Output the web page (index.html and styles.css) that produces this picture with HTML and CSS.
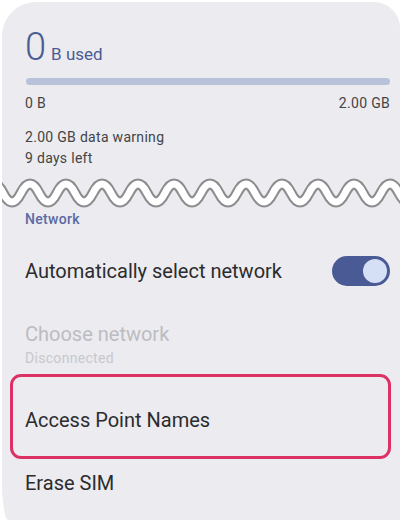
FILE: index.html
```html
<!DOCTYPE html>
<html lang="en">
<head>
  <meta charset="UTF-8">
  <meta name="viewport" content="width=device-width, initial-scale=1.0">
  <title>SIM settings</title>
  <link rel="stylesheet" href="styles.css">
</head>
<body>

  <!-- Phone screen card -->
  <div class="screen">

    <!-- Data usage -->
    <section class="usage">
      <div class="usage-total">
        <span class="usage-num">0</span>
        <span class="usage-unit">B used</span>
      </div>
      <div class="usage-bar"></div>
      <div class="usage-scale">
        <span>0 B</span>
        <span>2.00 GB</span>
      </div>
      <p class="usage-note">2.00 GB data warning</p>
      <p class="usage-note">9 days left</p>
    </section>

    <!-- Cut mark -->
    <svg class="wave" width="398" height="34" viewBox="0 0 398 34">
      <path class="wave-edge" d="M -17 17 Q -8 -1 1 17 T 19 17 T 37 17 T 55 17 T 73 17 T 91 17 T 109 17 T 127 17 T 145 17 T 163 17 T 181 17 T 199 17 T 217 17 T 235 17 T 253 17 T 271 17 T 289 17 T 307 17 T 325 17 T 343 17 T 361 17 T 379 17 T 397 17 T 415 17"/>
      <path class="wave-fill" d="M -17 17 Q -8 -1 1 17 T 19 17 T 37 17 T 55 17 T 73 17 T 91 17 T 109 17 T 127 17 T 145 17 T 163 17 T 181 17 T 199 17 T 217 17 T 235 17 T 253 17 T 271 17 T 289 17 T 307 17 T 325 17 T 343 17 T 361 17 T 379 17 T 397 17 T 415 17"/>
    </svg>

    <!-- Network settings -->
    <section class="network">
      <h2 class="section-title">Network</h2>

      <div class="row row-switch">
        <span class="row-title">Automatically select network</span>
        <span class="switch"><span class="switch-thumb"></span></span>
      </div>

      <div class="row row-disabled">
        <span class="row-title">Choose network</span>
        <span class="row-sub">Disconnected</span>
      </div>

      <div class="row row-highlight">
        <span class="row-title">Access Point Names</span>
      </div>

      <div class="row row-plain">
        <span class="row-title">Erase SIM</span>
      </div>
    </section>

  </div>

</body>
</html>
```
FILE: styles.css
```css
/* Global Styles */
body {
  margin: 0;
  padding: 0;
  background-color: #ffffff;
  font-family: Roboto, "Noto Sans", sans-serif;
  overflow: hidden;
}

p, h2 {
  margin: 0;
}

.screen {
  margin: 2px 0 0 2px;
  width: 398px;
  height: 518px;
  overflow: hidden;
  background-color: #ebebf0;
  border-radius: 34px 26px 0 6px / 34px 26px 0 40px;
}

/* Data usage */
.usage {
  padding: 26px 10px 0 23px;
  color: #444;
}

.usage-total {
  display: flex;
  align-items: baseline;
  gap: 5px;
  height: 38px;
  color: #4b5b94;
}

.usage-num {
  font-size: 38px;
  font-weight: 300;
  line-height: 38px;
}

.usage-unit {
  font-size: 17px;
  line-height: 20px;
}

.usage-bar {
  height: 7px;
  margin: 12px 0 0 1px;
  border-radius: 4px;
  background-color: #b8c2d8;
}

.usage-scale {
  display: flex;
  justify-content: space-between;
  font-size: 14px;
  line-height: 18px;
  letter-spacing: 0.3px;
  margin: 9px 0 15px 0;
}

.usage-note {
  font-size: 14px;
  line-height: 21px;
  letter-spacing: 0.3px;
}

/* Cut mark */
.wave {
  display: block;
  margin-top: 7px;
}

.wave path {
  fill: none;
  stroke-linecap: round;
}

.wave-edge {
  stroke: #8d8d90;
  stroke-width: 11;
}

.wave-fill {
  stroke: #ffffff;
  stroke-width: 7;
}

/* Network settings */
.network {
  padding: 1px 9px 0 8px;
}

.section-title {
  font-size: 14px;
  line-height: 16px;
  font-weight: 500;
  letter-spacing: 0.3px;
  color: #5b6aa3;
  padding-left: 15px;
}

.row {
  display: flex;
  flex-direction: column;
  justify-content: center;
  padding: 0 15px;
}

.row-title {
  font-size: 20px;
  line-height: 24px;
  color: #2c2c2e;
}

.row-switch {
  flex-direction: row;
  justify-content: space-between;
  align-items: center;
  height: 52px;
  margin-top: 18px;
  padding-right: 1px;
}

.switch {
  display: flex;
  align-items: center;
  justify-content: flex-end;
  width: 58px;
  height: 30px;
  padding: 0 3px;
  box-sizing: border-box;
  border-radius: 15px;
  background-color: #4a5a95;
}

.switch-thumb {
  width: 24px;
  height: 24px;
  border-radius: 50%;
  background-color: #d5dff5;
}

.row-disabled {
  margin-top: 25px;
}

.row-disabled .row-title {
  color: #bcbcc0;
}

.row-disabled .row-sub {
  font-size: 14px;
  line-height: 17px;
  letter-spacing: 0.3px;
  color: #c8c8cc;
  margin-top: 4px;
}

.row-highlight {
  box-sizing: border-box;
  height: 85px;
  margin-top: 7px;
  padding: 6px 12px 0 12px;
  border: 3px solid #dc3164;
  border-radius: 11px;
}

.row-plain {
  height: 48px;
}
```
